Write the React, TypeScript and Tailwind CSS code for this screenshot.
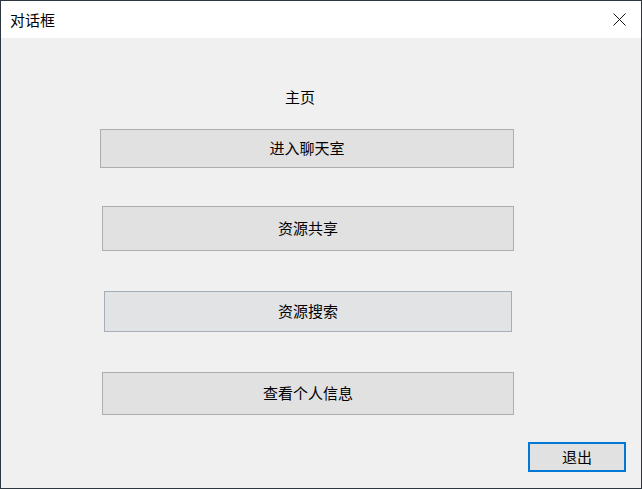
import React from "react";

const font = { fontFamily: '"Noto Sans CJK SC", "Microsoft YaHei", sans-serif' };

export default function App() {
  return (
    <div
      className="w-[642px] h-[489px] border border-[#2e3640] bg-[#f0f0f0] flex flex-col text-black"
      style={font}
    >
      <div className="h-[37px] bg-white flex items-center justify-between shrink-0">
        <span className="ml-[9px] text-[15px] leading-[20px]">对话框</span>
        <svg className="mr-[15px]" width="13" height="13" viewBox="0 0 13 13">
          <path d="M0.5 0.5 L12.5 12.5 M12.5 0.5 L0.5 12.5" stroke="#111" strokeWidth="1" fill="none" />
        </svg>
      </div>
      <div className="flex flex-col items-start flex-1">
        <div className="mt-[49px] ml-[284px] h-[20px] text-[15px] leading-[20px]">主页</div>
        <button className="mt-[22px] ml-[99px] w-[414px] h-[39px] border border-[#adadad] bg-[#e1e1e1] text-[15px] leading-[20px] flex items-center justify-center pb-[1px]">
          进入聊天室
        </button>
        <button className="mt-[38px] ml-[101px] w-[412px] h-[45px] border border-[#adadad] bg-[#e1e1e1] text-[15px] leading-[20px] flex items-center justify-center pb-[1px]">
          资源共享
        </button>
        <button className="mt-[40px] ml-[103px] w-[408px] h-[41px] border border-[#a5aeb7] bg-[#e2e3e5] text-[15px] leading-[20px] flex items-center justify-center pb-[1px]">
          资源搜索
        </button>
        <button className="mt-[40px] ml-[101px] w-[412px] h-[43px] border border-[#adadad] bg-[#e1e1e1] text-[15px] leading-[20px] flex items-center justify-center pb-[1px]">
          查看个人信息
        </button>
        <button className="mt-[27px] ml-[527px] w-[98px] h-[30px] border-2 border-[#0078d7] bg-[#e1e1e1] text-[15px] leading-[20px] flex items-center justify-center">
          退出
        </button>
      </div>
    </div>
  );
}
